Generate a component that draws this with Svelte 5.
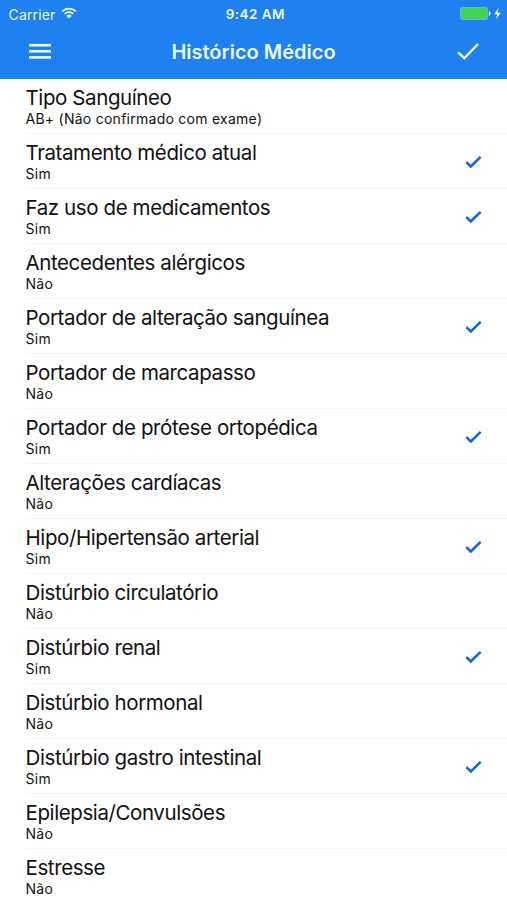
<script>
  const rows = [
    { title: 'Tipo Sanguíneo', value: 'AB+ (Não confirmado com exame)', checked: false },
    { title: 'Tratamento médico atual', value: 'Sim', checked: true },
    { title: 'Faz uso de medicamentos', value: 'Sim', checked: true },
    { title: 'Antecedentes alérgicos', value: 'Não', checked: false },
    { title: 'Portador de alteração sanguínea', value: 'Sim', checked: true },
    { title: 'Portador de marcapasso', value: 'Não', checked: false },
    { title: 'Portador de prótese ortopédica', value: 'Sim', checked: true },
    { title: 'Alterações cardíacas', value: 'Não', checked: false },
    { title: 'Hipo/Hipertensão arterial', value: 'Sim', checked: true },
    { title: 'Distúrbio circulatório', value: 'Não', checked: false },
    { title: 'Distúrbio renal', value: 'Sim', checked: true },
    { title: 'Distúrbio hormonal', value: 'Não', checked: false },
    { title: 'Distúrbio gastro intestinal', value: 'Sim', checked: true },
    { title: 'Epilepsia/Convulsões', value: 'Não', checked: false },
    { title: 'Estresse', value: 'Não', checked: false }
  ];
</script>

<div class="screen">
  <header>
    <div class="status">
      <div class="carrier">
        <span>Carrier</span>
        <svg width="16" height="12" viewBox="0 0 16 12" fill="none" stroke="#e6fbff" stroke-width="1.9">
          <path d="M1.1 4.4a10 10 0 0 1 13.8 0" />
          <path d="M3.6 6.9a6.4 6.4 0 0 1 8.8 0" />
          <path d="M8 11.5 5.4 8.9a3.7 3.7 0 0 1 5.2 0z" fill="#e6fbff" stroke="none" />
        </svg>
      </div>
      <span class="time">9:42 AM</span>
      <div class="power">
        <svg width="42" height="14" viewBox="0 0 42 14">
          <rect x="0.5" y="0.5" width="27" height="12" rx="2" fill="#43d551" stroke="#69b7d8" />
          <path d="M28.8 4.2c2.4.3 2.4 4.3 0 4.6z" fill="#d8f4ff" />
          <path d="M38.6 1 34.2 7.3h3L36 12l4.8-6.3h-3.2z" fill="#f4feff" />
        </svg>
      </div>
    </div>
    <nav>
      <button aria-label="Menu">
        <svg width="24" height="18" viewBox="0 0 24 18" fill="#f0fdff">
          <rect x="2" y="0.9" width="22" height="2.6" />
          <rect x="2" y="7" width="22" height="2.6" />
          <rect x="2" y="13.1" width="22" height="2.6" />
        </svg>
      </button>
      <h1>Histórico Médico</h1>
      <button aria-label="Confirmar">
        <svg width="24" height="20" viewBox="0 0 24 20" fill="none" stroke="#fff" stroke-width="2.3">
          <path d="M2 10.3 8.3 16.2 22 2" />
        </svg>
      </button>
    </nav>
  </header>

  <ul>
    {#each rows as row}
      <li>
        <div class="text">
          <span class="title">{row.title}</span>
          <span class="value">{row.value}</span>
        </div>
        {#if row.checked}
          <svg width="17" height="14" viewBox="0 0 17 14" fill="none" stroke="#0b63f0" stroke-width="2.5">
            <path d="M1.3 7.2 5.8 11.5 15.6 1.9" />
          </svg>
        {/if}
      </li>
    {/each}
  </ul>
</div>

<style>
  :global(body) {
    background: #fff;
  }
  .screen {
    width: 507px;
    height: 900px;
    overflow: hidden;
    background: #fff;
    color: #111;
    font-family: Inter, 'Liberation Sans', sans-serif;
  }
  header {
    box-sizing: border-box;
    height: 79px;
    background: #1f80f0;
    color: #e9fbff;
  }
  .status {
    display: grid;
    grid-template-columns: 1fr auto 1fr;
    align-items: center;
    height: 27px;
    padding: 0 5px 0 8.5px;
    font-size: 14px;
    line-height: 27px;
  }
  .carrier {
    display: flex;
    align-items: center;
    gap: 6px;
    letter-spacing: 0.15px;
  }
  .carrier svg {
    margin-bottom: 2px;
  }
  .time {
    font-size: 13.5px;
    font-weight: 600;
    letter-spacing: 0.45px;
    line-height: 28px;
  }
  .power {
    display: flex;
    justify-content: flex-end;
  }
  nav {
    display: flex;
    align-items: center;
    justify-content: space-between;
    height: 50px;
    padding: 0 27px;
  }
  button {
    display: flex;
    padding: 0;
    border: 0;
    background: none;
  }
  h1 {
    margin: 0;
    font-size: 20px;
    font-weight: 600;
    line-height: 50px;
    white-space: nowrap;
  }
  ul {
    margin: 0;
    padding: 0;
    list-style: none;
  }
  li {
    display: flex;
    align-items: center;
    justify-content: space-between;
    box-sizing: border-box;
    height: 55px;
    margin-left: 25.5px;
    padding-top: 2px;
    padding-right: 25px;
    border-bottom: 1px solid #f5f5f5;
  }
  .text {
    display: flex;
    flex-direction: column;
    white-space: nowrap;
  }
  .title {
    font-size: 20.5px;
    line-height: 24px;
    letter-spacing: -0.4px;
  }
  .value {
    font-size: 14px;
    line-height: 18px;
    letter-spacing: 0.26px;
  }
</style>
